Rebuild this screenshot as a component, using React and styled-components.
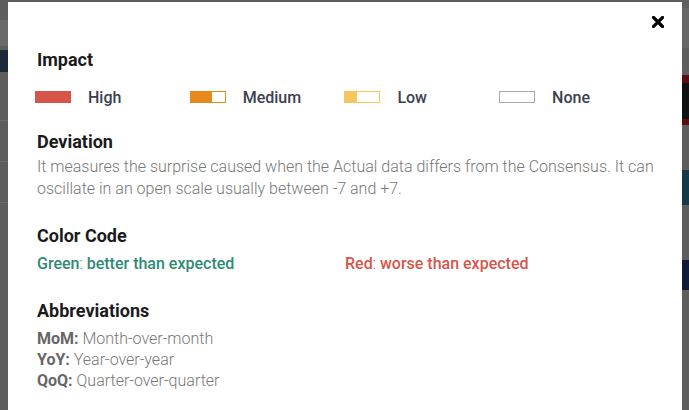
import React from "react";
import styled, { createGlobalStyle } from "styled-components";

const GlobalStyle = createGlobalStyle`
	html, body {
		margin: 0;
		padding: 0;
		height: 100%;
		overflow: hidden;
		background: #5e5e5e;
		font-family: Roboto, "Liberation Sans", sans-serif;
	}
`;

const impacts = [
	{ label: "High", fill: "#d65548", border: "#d65548", level: 1 },
	{ label: "Medium", fill: "#e8891d", border: "#e8891d", level: 0.62 },
	{ label: "Low", fill: "#f5c560", border: "#f5c560", level: 0.33 },
	{ label: "None", fill: "transparent", border: "#a9a9a9", level: 0 },
];

const leftBlocks = [
	{ h: 20, c: "#5e5e5e" },
	{ h: 26, c: "#6a6a6a" },
	{ h: 4, c: "#5e5e5e" },
	{ h: 22, c: "#1d2838" },
	{ h: 48, c: "#5e5e5e" },
	{ h: 1, c: "#6c6c6c" },
	{ h: 40, c: "#5e5e5e" },
	{ h: 1, c: "#6c6c6c" },
	{ h: 40, c: "#5e5e5e" },
	{ h: 1, c: "#6c6c6c" },
	{ h: 207, c: "#5e5e5e" },
];

const rightBlocks = [
	{ h: 8, c: "#5e5e5e" },
	{ h: 40, c: "#666666" },
	{ h: 27, c: "#5e5e5e" },
	{ h: 8, c: "#5a0c12" },
	{ h: 36, c: "#111111" },
	{ h: 6, c: "#5a0c12" },
	{ h: 45, c: "#5e5e5e" },
	{ h: 35, c: "#123a48" },
	{ h: 55, c: "#5e5e5e" },
	{ h: 30, c: "#101a38" },
	{ h: 120, c: "#5e5e5e" },
];

const App = () => {
	return (
		<>
			<GlobalStyle />
			<Page>
				<Strip width={8}>
					{leftBlocks.map((b, i) => (
						<Block key={i} h={b.h} c={b.c} />
					))}
				</Strip>
				<Modal>
					<Close aria-label="Close">
						<svg width="12" height="12" viewBox="0 0 12 12">
							<path
								d="M1.5 1.5 L10.5 10.5 M10.5 1.5 L1.5 10.5"
								stroke="#000"
								strokeWidth="3.2"
								strokeLinecap="square"
							/>
						</svg>
					</Close>

					<Heading>Impact</Heading>
					<ImpactRow>
						{impacts.map((item) => (
							<ImpactItem key={item.label}>
								<Bar border={item.border}>
									<BarFill
										color={item.fill}
										style={{ width: `${item.level * 100}%` }}
									/>
								</Bar>
								<ImpactLabel>{item.label}</ImpactLabel>
							</ImpactItem>
						))}
					</ImpactRow>

					<Heading gap={24}>Deviation</Heading>
					<Text>
						It measures the surprise caused when the Actual data differs from the
						Consensus. It can oscillate in an open scale usually between -7 and +7.
					</Text>

					<Heading gap={25}>Color Code</Heading>
					<ColorRow>
						<ColorItem color="#2e8b74">
							<b>Green</b>: <b>better than expected</b>
						</ColorItem>
						<ColorItem color="#d9544a">
							<b>Red</b>: <b>worse than expected</b>
						</ColorItem>
					</ColorRow>

					<Heading gap={25}>Abbreviations</Heading>
					<AbbrList>
						<li>
							<b>MoM:</b> Month-over-month
						</li>
						<li>
							<b>YoY:</b> Year-over-year
						</li>
						<li>
							<b>QoQ:</b> Quarter-over-quarter
						</li>
					</AbbrList>
				</Modal>
				<Strip width={7}>
					{rightBlocks.map((b, i) => (
						<Block key={i} h={b.h} c={b.c} />
					))}
				</Strip>
			</Page>
		</>
	);
};

const Page = styled.div`
	display: flex;
	height: 410px;
	width: 689px;
	overflow: hidden;
`;

const Strip = styled.div`
	width: ${(p) => p.width}px;
	flex-shrink: 0;
	display: flex;
	flex-direction: column;
`;

const Block = styled.div`
	height: ${(p) => p.h}px;
	background: ${(p) => p.c};
	flex-shrink: 0;
`;

const Modal = styled.div`
	position: relative;
	flex: 1;
	margin-top: 2px;
	height: 420px;
	background: #ffffff;
	padding: 47px 28px 0 29px;
	box-sizing: border-box;
`;

const Close = styled.button`
	position: absolute;
	top: 14px;
	right: 18px;
	padding: 0;
	border: none;
	background: none;
	display: flex;
	cursor: pointer;
`;

const Heading = styled.h3`
	margin: ${(p) => p.gap || 0}px 0 0;
	font-size: 18px;
	line-height: 22px;
	font-weight: 700;
	color: #1b1b1b;
`;

const ImpactRow = styled.div`
	margin-top: 16px;
	display: grid;
	grid-template-columns: repeat(4, 154.7px);
	margin-left: -2px;
`;

const ImpactItem = styled.div`
	display: flex;
	align-items: center;
	gap: 17px;
	height: 20px;
`;

const Bar = styled.div`
	width: 36px;
	height: 12px;
	box-sizing: border-box;
	border: 1px solid ${(p) => p.border};
	display: flex;
`;

const BarFill = styled.div`
	height: 100%;
	background: ${(p) => p.color};
`;

const ImpactLabel = styled.span`
	font-size: 16px;
	font-weight: 500;
	color: #3b4150;
`;

const Text = styled.p`
	margin: 3px 0 0;
	font-size: 16px;
	line-height: 22px;
	font-weight: 300;
	color: #777777;
`;

const ColorRow = styled.div`
	margin-top: 6px;
	display: grid;
	grid-template-columns: 308px 1fr;
`;

const ColorItem = styled.div`
	font-size: 16px;
	line-height: 22px;
	color: ${(p) => p.color};
	font-weight: 300;

	b {
		font-weight: 500;
	}
`;

const AbbrList = styled.ul`
	list-style: none;
	margin: 6px 0 0;
	padding: 0;

	li {
		font-size: 16px;
		line-height: 21px;
		font-weight: 300;
		color: #777777;
	}

	b {
		font-weight: 700;
		color: #666666;
	}
`;

export default App;
